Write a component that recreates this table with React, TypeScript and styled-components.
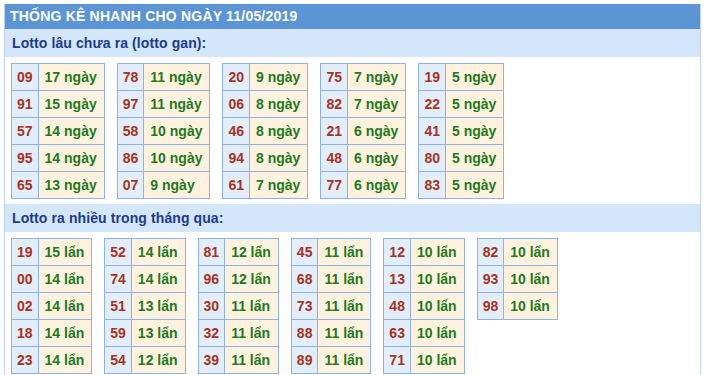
import styled, { createGlobalStyle } from "styled-components";

type Entry = [string, string];

const GAN: Entry[][] = [
  [["09", "17"], ["91", "15"], ["57", "14"], ["95", "14"], ["65", "13"]],
  [["78", "11"], ["97", "11"], ["58", "10"], ["86", "10"], ["07", "9"]],
  [["20", "9"], ["06", "8"], ["46", "8"], ["94", "8"], ["61", "7"]],
  [["75", "7"], ["82", "7"], ["21", "6"], ["48", "6"], ["77", "6"]],
  [["19", "5"], ["22", "5"], ["41", "5"], ["80", "5"], ["83", "5"]],
];

const NHIEU: Entry[][] = [
  [["19", "15"], ["00", "14"], ["02", "14"], ["18", "14"], ["23", "14"]],
  [["52", "14"], ["74", "14"], ["51", "13"], ["59", "13"], ["54", "12"]],
  [["81", "12"], ["96", "12"], ["30", "11"], ["32", "11"], ["39", "11"]],
  [["45", "11"], ["68", "11"], ["73", "11"], ["88", "11"], ["89", "11"]],
  [["12", "10"], ["13", "10"], ["48", "10"], ["63", "10"], ["71", "10"]],
  [["82", "10"], ["93", "10"], ["98", "10"]],
];

const GlobalStyle = createGlobalStyle`
  body {
    margin: 0;
    background: #ffffff;
    font-family: "Liberation Sans", Arial, sans-serif;
  }
`;

const StatTable = ({ rows, unit }: { rows: Entry[]; unit: string }) => (
  <Table>
    <tbody>
      {rows.map(([num, count]) => (
        <tr key={num}>
          <NumCell>{num}</NumCell>
          <CountCell>
            {count} {unit}
          </CountCell>
        </tr>
      ))}
    </tbody>
  </Table>
);

export default function App() {
  return (
    <>
      <GlobalStyle />
      <Box>
        <Title>THỐNG KÊ NHANH CHO NGÀY 11/05/2019</Title>
        <SectionTitle>Lotto lâu chưa ra (lotto gan):</SectionTitle>
        <TableRow>
          {GAN.map((rows, i) => (
            <StatTable key={i} rows={rows} unit="ngày" />
          ))}
        </TableRow>
        <SectionTitle>Lotto ra nhiều trong tháng qua:</SectionTitle>
        <TableRow>
          {NHIEU.map((rows, i) => (
            <StatTable key={i} rows={rows} unit="lẩn" />
          ))}
        </TableRow>
      </Box>
    </>
  );
}

const Box = styled.div`
  margin: 4px 6px 0 4px;
  border-left: 1px solid #bfd2ee;
  border-right: 1px solid #bfd2ee;
  min-height: 371px;
`;

const Title = styled.div`
  height: 25px;
  line-height: 25px;
  padding-left: 5px;
  background: #5b95d5;
  color: #ffffff;
  font-size: 14px;
  font-weight: bold;
  letter-spacing: 0.2px;
`;

const SectionTitle = styled.div`
  height: 28px;
  line-height: 28px;
  padding-left: 7px;
  background: #d4e6f9;
  color: #1c3b8f;
  font-size: 14px;
  font-weight: bold;
  letter-spacing: 0.1px;
`;

const TableRow = styled.div`
  display: flex;
  align-items: flex-start;
  gap: 12px;
  padding: 6px 6px 5px;
`;

const Table = styled.table`
  border-collapse: collapse;
  font-size: 14px;
  font-weight: bold;
`;

const Cell = styled.td`
  height: 26px;
  padding: 0 5px;
  border: 1px solid #8fb1e3;
  white-space: nowrap;
`;

const NumCell = styled(Cell)`
  background: #e2eefc;
  color: #a8331c;
`;

const CountCell = styled(Cell)`
  padding: 0 7px 0 6px;
  background: #fff3e0;
  color: #1d7a1d;
`;
